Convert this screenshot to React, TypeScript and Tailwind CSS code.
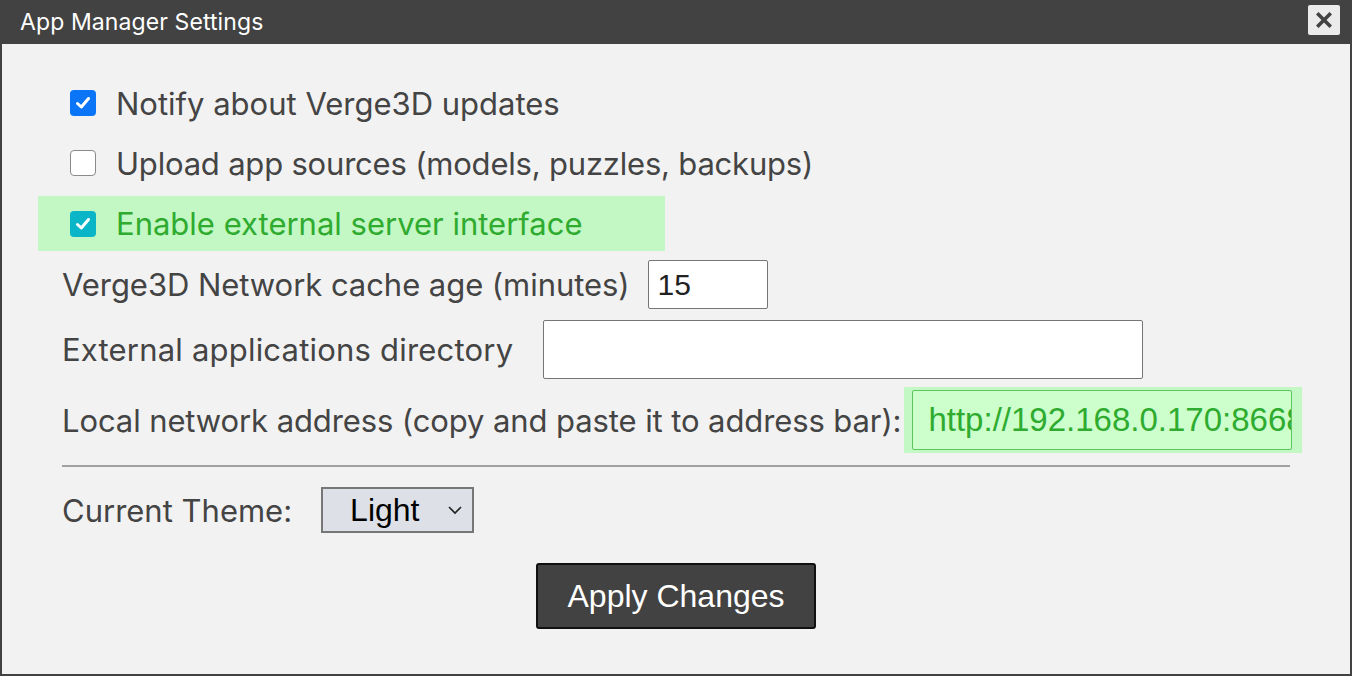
import React from "react";

function Check({ color }: { color: string }) {
  return (
    <span
      className="flex h-[26px] w-[26px] shrink-0 items-center justify-center rounded-[4px]"
      style={{ background: color }}
    >
      <svg width="18" height="18" viewBox="0 0 18 18" fill="none">
        <path d="M3.5 9.5 L7.3 13 L14.5 4.5" stroke="white" strokeWidth="3" strokeLinecap="round" strokeLinejoin="round" />
      </svg>
    </span>
  );
}

const arial = { fontFamily: "'Liberation Sans', Arial, sans-serif" };

export default function App() {
  const label = "text-[31px] text-[#444444] leading-none whitespace-nowrap";
  return (
    <div
      className="w-[1352px] h-[676px] bg-[#424242] flex flex-col"
      style={{ fontFamily: "Inter, 'Open Sans', sans-serif" }}
    >
      <div className="h-[44px] flex items-center justify-between pl-[20px] pr-[12px]">
        <span className="text-white text-[23px] tracking-[0.1px]">App Manager Settings</span>
        <span className="w-[32px] h-[30px] mt-[-4px] bg-[#ebebeb] rounded-[2px] flex items-center justify-center">
          <svg width="16" height="16" viewBox="0 0 16 16">
            <path d="M2.5 2.5 L13.5 13.5 M13.5 2.5 L2.5 13.5" stroke="#424242" strokeWidth="3.6" strokeLinecap="square" />
          </svg>
        </span>
      </div>
      <div className="flex-1 mx-[2px] mb-[2px] bg-[#f2f2f2] pt-[29px] pl-[36px] pr-[48px]">
        <div className="flex flex-col">
          <div className="h-[60px] flex items-center gap-[20px] pl-[32px]">
            <Check color="#0b75f8" />
            <span className={label}>Notify about Verge3D updates</span>
          </div>
          <div className="h-[60px] flex items-center gap-[20px] pl-[32px]">
            <span className="h-[26px] w-[26px] shrink-0 rounded-[4px] bg-white border border-[#8a8a8a]" />
            <span className={label + " tracking-[-0.2px]"}>Upload app sources (models, puzzles, backups)</span>
          </div>
          <div className="mt-[3px] h-[55px] w-[627px] flex items-center gap-[20px] pl-[32px] bg-[#c3f7c3]">
            <Check color="#0ab5c8" />
            <span className="text-[31px] leading-none text-[#2fab2f] whitespace-nowrap">Enable external server interface</span>
          </div>
          <div className="flex items-center pl-[24px] mt-[9px] h-[49px]">
            <span className={label + " tracking-[-0.05px]"}>Verge3D Network cache age (minutes)</span>
            <div className="ml-[18px] w-[120px] h-[49px] bg-white border border-[#767676] rounded-[2px] flex items-center pl-[9px] text-[30px] text-[#222]" style={arial}>
              15
            </div>
          </div>
          <div className="flex items-center pl-[24px] mt-[11px] h-[59px]">
            <span className={label + " tracking-[0.2px]"}>External applications directory</span>
            <div className="ml-[30px] w-[600px] h-[59px] bg-white border border-[#767676] rounded-[2px]" />
          </div>
          <div className="flex items-center pl-[24px] mt-[8px] h-[66px]">
            <span className={label + " tracking-[-0.1px]"}>Local network address (copy and paste it to address bar):</span>
            <div className="ml-[3px] w-[400px] h-[66px] bg-[#c3f7c3] flex items-center pl-[8px]">
              <div className="w-[380px] h-[60px] bg-[#ccffcc] border border-[#5cc75c] rounded-[2px] flex items-center pl-[15px] overflow-hidden whitespace-nowrap text-[33px] text-[#2fab2f]" style={arial}>
                http://192.168.0.170:8668
              </div>
            </div>
          </div>
          <div className="ml-[24px] mt-[12px] h-[2px] w-[1228px] bg-[#a0a0a0]" />
          <div className="flex items-center pl-[24px] mt-[20px] h-[46px]">
            <span className={label}>Current Theme:</span>
            <div className="ml-[29px] w-[153px] h-[46px] bg-[#dde1e7] border-2 border-[#777] flex items-center pl-[27px] pr-[9px] justify-between text-[32px] text-black" style={arial}>
              <span>Light</span>
              <svg width="16" height="10" viewBox="0 0 16 10">
                <path d="M2 2 L8 8 L14 2" stroke="#222" strokeWidth="1.6" fill="none" />
              </svg>
            </div>
          </div>
          <div className="flex mt-[30px] pl-[498px]">
            <div className="w-[280px] h-[66px] bg-[#424242] border-2 border-[#111] rounded-[3px] flex items-center justify-center text-white text-[32px]" style={arial}>
              Apply Changes
            </div>
          </div>
        </div>
      </div>
    </div>
  );
}
